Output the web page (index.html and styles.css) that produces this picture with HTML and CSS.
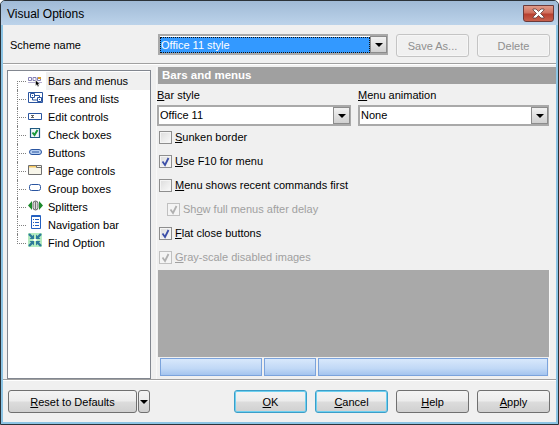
FILE: index.html
```html
<!DOCTYPE html>
<html>
<head>
<meta charset="utf-8">
<title>Visual Options</title>
<link rel="stylesheet" href="styles.css">
</head>
<body>
<div class="window">
  <div class="titlebar">
    <span class="title">Visual Options</span>
    <div class="close"><svg width="17" height="11" viewBox="0 0 17 11"><path d="M3 1h3l2.500 2.500L11 1h3v1L10.500 5.500 14 9v1h-3L8.500 7.500 6 10H3V9l3.500-3.500L3 2z" fill="#fff" stroke="#5a3a3a" stroke-width=".8"/></svg></div>
  </div>
  <div class="client">
    <div class="scheme">
      <span class="scheme-label">Scheme name</span>
      <div class="combo combo-scheme">
        <div class="combo-value selected"><span>Office 11 style</span></div>
        <div class="arrow-btn"><i></i></div>
      </div>
      <div class="btn disabled w73">Save As...</div>
      <div class="btn disabled w73">Delete</div>
    </div>
    <div class="main">
      <div class="tree">
        <div class="row current">
          <svg class="ico" width="16" height="16" viewBox="0 0 16 16"><path d="M1 10.500h14" stroke="#b4aed0"/><path d="M1.500 5.500h3v3h-3zM6 5.500h3v3H6zM10.500 5.500h3v3h-3z" fill="none" stroke="#8480b4"/><path d="M11 5h3v2h-3z" fill="#d8a030"/><path d="M8.500 8v6l1.400-1.300 1 2 1.200-.6-1-1.900H13z" fill="#000" stroke="#fff" stroke-width=".5"/></svg>
          <span class="lbl">Bars and menus</span>
        </div>
        <div class="row">
          <svg class="ico" width="16" height="16" viewBox="0 0 16 16"><path d="M1.500 2.500h14v10h-14z" fill="#fff" stroke="#2a55a0"/><path d="M3.500 3.500h4v4h-4zM10.500 7.500h4v4h-4z" fill="#fff" stroke="#2a55a0"/><path d="M5 5h1v1H5zM12 9h1v1h-1z" fill="#2a55a0"/><path d="M5.500 8v2h5M7.500 5.500h5v2" stroke="#2a55a0" fill="none"/></svg>
          <span class="lbl">Trees and lists</span>
        </div>
        <div class="row">
          <svg class="ico" width="16" height="16" viewBox="0 0 16 16"><path d="M1.500 5.500h13v6h-13z" fill="#fff" stroke="#2a55a0"/><path d="M4 7.500h3M4 9.500h3M5.500 8v1" stroke="#666"/></svg>
          <span class="lbl">Edit controls</span>
        </div>
        <div class="row">
          <svg class="ico" width="16" height="16" viewBox="0 0 16 16"><path d="M3.500 2.500h9v9h-9z" fill="#eef6fb" stroke="#1f5a80" stroke-width="1.200"/><path d="M5.500 6.500l2 2.500 3-5" fill="none" stroke="#189838" stroke-width="2"/></svg>
          <span class="lbl">Check boxes</span>
        </div>
        <div class="row">
          <svg class="ico" width="16" height="16" viewBox="0 0 16 16"><rect x="2.500" y="5.500" width="12" height="5" rx="2.500" fill="#b8d0f2" stroke="#2a55a0"/><path d="M5 8h7" stroke="#2a55a0"/></svg>
          <span class="lbl">Buttons</span>
        </div>
        <div class="row">
          <svg class="ico" width="16" height="16" viewBox="0 0 16 16"><path d="M1.500 3.500h13v9h-13z" fill="#f8f6ea" stroke="#707070"/><path d="M2 4h7v1.500H2z" fill="#f6c860"/><path d="M9.500 3.500v2h5" fill="none" stroke="#707070"/></svg>
          <span class="lbl">Page controls</span>
        </div>
        <div class="row">
          <svg class="ico" width="16" height="16" viewBox="0 0 16 16"><rect x="2.500" y="4.500" width="11" height="6" rx="2" fill="#fff" stroke="#2a55a0"/></svg>
          <span class="lbl">Group boxes</span>
        </div>
        <div class="row">
          <svg class="ico" width="16" height="16" viewBox="0 0 16 16"><path d="M5 3v9L1 7.500zM12 3v9l4-4.500z" fill="#1e8a2c"/><rect x="6" y="3" width="5" height="9" rx="2.500" fill="#d8d8d8" stroke="#666"/><path d="M8.500 3.500v8" stroke="#777"/></svg>
          <span class="lbl">Splitters</span>
        </div>
        <div class="row">
          <svg class="ico" width="16" height="16" viewBox="0 0 16 16"><path d="M4.500-.5h9v13h-9z" fill="#fff" stroke="#2460c0"/><path d="M5-1h8v2H5z" fill="#2460c0"/><path d="M6 3h1v1H6zM6 6h1v1H6zM6 9h1v1H6z" fill="#2460c0"/><path d="M8 3.500h4M8 6.500h4M8 9.500h4" stroke="#2460c0"/></svg>
          <span class="lbl">Navigation bar</span>
        </div>
        <div class="row">
          <svg class="ico" width="16" height="16" viewBox="0 0 16 16"><path d="M1-1h14v14H1z" fill="#b4ecc0"/><path d="M6.500 5h3v2h-3z" fill="#fff"/><path d="M2 0l3.500 3.500M14 0l-3.500 3.500M2 12l3.500-3.500M14 12l-3.500-3.500" stroke="#2e7a9a" stroke-width="2.400"/><path d="M7 5H2.500L7 .5zM9 5h4.500L9 .5zM7 7H2.500L7 11.500zM9 7h4.500L9 11.500z" fill="#2e7a9a"/></svg>
          <span class="lbl">Find Option</span>
        </div>
      </div>
      <div class="panel">
        <div class="panel-head">Bars and menus</div>
        <div class="fields">
          <div class="field bar-field">
            <label><u>B</u>ar style</label>
            <div class="combo"><div class="combo-value">Office 11</div><div class="arrow-btn"><i></i></div></div>
          </div>
          <div class="field anim-field">
            <label><u>M</u>enu animation</label>
            <div class="combo"><div class="combo-value">None</div><div class="arrow-btn"><i></i></div></div>
          </div>
        </div>
        <div class="checks">
          <div class="check"><span class="box"></span><span><u>S</u>unken border</span></div>
          <div class="check"><span class="box on"><svg width="11" height="11" viewBox="0 0 11 11"><path d="M2.500 5.500L5 9l3.500-7" fill="none" stroke="#3c4fa8" stroke-width="1.800"/></svg></span><span><u>U</u>se F10 for menu</span></div>
          <div class="check"><span class="box"></span><span><u>M</u>enu shows recent commands first</span></div>
          <div class="check sub off"><span class="box"><svg width="11" height="11" viewBox="0 0 11 11"><path d="M2.500 5.500L5 9l3.500-7" fill="none" stroke="#b0b0b0" stroke-width="1.800"/></svg></span><span>Sh<u>o</u>w full menus after delay</span></div>
          <div class="check"><span class="box on"><svg width="11" height="11" viewBox="0 0 11 11"><path d="M2.500 5.500L5 9l3.500-7" fill="none" stroke="#3c4fa8" stroke-width="1.800"/></svg></span><span><u>F</u>lat close buttons</span></div>
          <div class="check off"><span class="box"><svg width="11" height="11" viewBox="0 0 11 11"><path d="M2.500 5.500L5 9l3.500-7" fill="none" stroke="#b0b0b0" stroke-width="1.800"/></svg></span><span><u>G</u>ray-scale disabled images</span></div>
        </div>
        <div class="preview">
          <div class="preview-space"></div>
          <div class="headers"><div class="h1"></div><div class="h2"></div><div class="h3"></div></div>
        </div>
      </div>
    </div>
    <div class="footer">
      <div class="reset-group">
        <div class="btn reset"><span><u>R</u>eset to Defaults</span></div>
        <div class="btn reset-drop"><i></i></div>
      </div>
      <div class="actions">
        <div class="btn default w73"><span><u>O</u>K</span></div>
        <div class="btn default w73"><span><u>C</u>ancel</span></div>
        <div class="btn w73"><span><u>H</u>elp</span></div>
        <div class="btn w73"><span><u>A</u>pply</span></div>
      </div>
    </div>
  </div>
</div>
</body>
</html>
```
FILE: styles.css
```css
* { box-sizing: border-box; }
html, body { margin: 0; padding: 0; background: #fff; }
body { font-family: "Liberation Sans", Arial, sans-serif; font-size: 11px; color: #000; }
i { display: block; }
u { text-decoration: underline; }

.window {
  width: 559px; height: 425px;
  display: flex; flex-direction: column;
  border: 1px solid #2b3238;
  border-radius: 5px 5px 0 0;
  background: #8cc4e4;
  overflow: hidden;
}
.titlebar {
  height: 24px; flex: none;
  display: flex; align-items: flex-start; justify-content: space-between;
  background: linear-gradient(#a0bad6, #bcd3ea);
  padding: 4px 4px 0 6px;
}
.title { font-size: 12px; line-height: 18px; color: #000; }
.close {
  width: 31px; height: 17px;
  border: 1px solid #6b3a3a; border-radius: 0 0 3px 3px;
  background: linear-gradient(#e09a88 0, #d0705e 45%, #b84030 55%, #c8604c);
  display: flex; align-items: center; justify-content: center;
}
.client {
  flex: 1; min-height: 0;
  margin: 0 2px 2px 2px;
  background: #f0f0f0;
  display: flex; flex-direction: column;
}

.scheme {
  height: 39px; flex: none;
  display: flex; align-items: flex-start; gap: 8px;
  padding: 9px 0 0 7px;
  border-bottom: 1px solid #a0a0a0;
}
.scheme > * { flex: none; }
.scheme-label { width: 140px; line-height: 22px; }
.combo-scheme { width: 230px; height: 21px; }
.w73 { width: 73px; }

.combo {
  display: flex; height: 21px;
  border: 2px solid #a9a9a9; border-width: 2px 1px 2px 2px;
  background: #fff;
}
.combo-value { flex: 1; min-width: 0; padding-left: 1px; line-height: 17px; }
.combo-value.selected { background: #3399ff; color: #fff; padding: 0; border: 1px dotted #111; line-height: 14px; margin-top: 1px; }
.arrow-btn {
  width: 17px; flex: none;
  border: 1px solid #8c8c8c;
  background: linear-gradient(#f2f2f2, #d0d0d0);
  display: flex; align-items: center; justify-content: center;
}
.arrow-btn i, .reset-drop i {
  width: 0; height: 0;
  border-left: 4px solid transparent; border-right: 4px solid transparent;
  border-top: 4px solid #000;
}

.btn {
  display: flex; align-items: center; justify-content: center;
  height: 23px;
  border: 1px solid #707070; border-radius: 3px;
  background: linear-gradient(#f4f4f4 0, #ececec 48%, #dcdcdc 52%, #d0d0d0);
}
.btn.disabled { border-color: #c4c4c4; background: #f0f0f0; color: #8f8f8f; box-shadow: inset 0 0 0 1px #f6f6f6; }
.btn.default { border-color: #3c9ec8; box-shadow: inset 0 0 0 1px #6ed0f0; }

.main { flex: 1; min-height: 0; display: flex; padding-top: 2px; border-top: 1px solid #fff; }
.tree {
  width: 144px; height: 309px; flex: none;
  margin: 3px 5px 0 4px;
  border: 1px solid #828790;
  background: #fff;
  padding-top: 1px;
  position: relative;
}
.row { height: 18px; display: flex; align-items: center; padding-left: 19px; position: relative; }
.row::before {
  content: ""; position: absolute;
  left: 9px; top: 0; width: 0; height: 18px;
  border-left: 1px dotted #808080;
}
.row::after {
  content: ""; position: absolute;
  left: 9px; top: 9px; width: 9px; height: 0;
  border-top: 1px dotted #808080;
}
.row:first-child::before { top: 9px; height: 9px; }
.row:last-child::before { height: 10px; }
.ico { flex: none; margin: -2px 3px 0 0; position: relative; z-index: 1; overflow: visible; }
.lbl { flex: 1; line-height: 18px; padding-left: 2px; }
.current .lbl { background: #f0f0f0; }

.panel { flex: 1; min-width: 0; display: flex; flex-direction: column; border-left: 1px solid #f8f8f8; }
.panel-head {
  height: 17px; flex: none;
  margin-left: 1px;
  background: #a0a0a0; color: #fff;
  font-weight: bold; font-size: 11.500px; line-height: 17px;
  padding-left: 4px;
}
.fields { display: flex; gap: 7px; margin-top: 2px; width: 392px; }
.field label { display: block; line-height: 18px; height: 19px; }
.bar-field { width: 194px; }
.anim-field { width: 191px; }
.field .combo { height: 21px; }

.checks { display: flex; flex-direction: column; margin-top: -1px; padding-left: 2px; }
.check { height: 24px; display: flex; align-items: center; gap: 3px; }
.box {
  width: 13px; height: 13px; flex: none;
  border: 1px solid #8e8e8e;
  background: linear-gradient(135deg, #dcdcdc, #fafafa);
  box-shadow: inset 0 0 0 1px #f4f4f4;
  display: flex; align-items: center; justify-content: center;
}
.sub { padding-left: 8px; }
.off { color: #a0a0a0; }
.off .box { border-color: #c0c0c0; background: #f4f4f4; }

.preview { width: 392px; margin: 1px 0 0 1px; display: flex; flex-direction: column; height: 107px; border-right: 1px solid #f8f8f8; }
.preview-space { flex: 1; background: #a9a9a9; }
.headers { height: 20px; flex: none; display: flex; gap: 2px; padding: 1px 1px 1px 2px; background: #f0f0f0; }
.headers div { border: 1px solid #7ba3dc; background: linear-gradient(#d8e8fb, #c0d8f6 60%, #a4c4ee); }
.h1 { width: 102px; }
.h2 { width: 52px; }
.h3 { flex: 1; }

.footer {
  height: 43px; flex: none;
  display: flex; justify-content: space-between; align-items: flex-start;
  padding: 10px 6px 0 5px;
  border-top: 1px solid #a0a0a0;
  box-shadow: inset 0 1px 0 #fff;
}
.reset-group { display: flex; gap: 1px; }
.reset { width: 129px; }
.reset-drop { width: 12px; }
.actions { display: flex; gap: 8px; }
```
